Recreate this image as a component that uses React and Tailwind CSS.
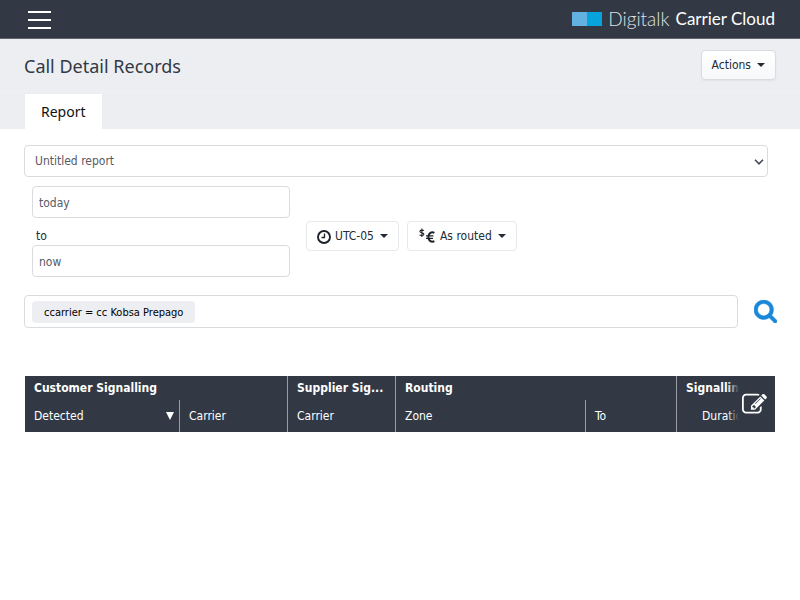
import React from "react";

const CARET = "h-0 w-0 border-x-4 border-t-4 border-x-transparent border-t-[#222b36]";
const FIELD =
  "w-full rounded border border-[#d9dbdf] bg-white text-xs text-[#555b66] outline-none";

function ClockIcon() {
  return (
    <svg className="h-4 w-4" viewBox="0 0 16 16" fill="none" stroke="#1c222b" aria-hidden="true">
      <circle cx="7" cy="9" r="6" strokeWidth="1.9" />
      <path d="M7.5 5.5V9.5H4.5" strokeWidth="1.3" />
    </svg>
  );
}

function CurrencyIcon() {
  return (
    <svg className="h-4 w-5" viewBox="0 0 20 16" fill="none" stroke="#1c222b" aria-hidden="true">
      <path d="M5.9 2.6C5.3 2 1.9 1.7 1.9 3.4C1.9 5.1 5.9 4.3 5.9 6.2C5.9 8 2.4 7.7 1.6 6.9M3.9 0.5V9" strokeWidth="1.1" />
      <path d="M16.4 4.9C13.6 3.4 10.4 5.2 10.4 9C10.4 13 13.6 14.8 16.4 13.2" strokeWidth="2" />
      <path d="M8 7.9H15.4M8 10.3H15" strokeWidth="1.3" />
    </svg>
  );
}

function SearchIcon() {
  return (
    <svg className="h-[23px] w-[23px]" viewBox="64 128 1664 1664" fill="#1a87d9" stroke="#1a87d9" strokeWidth="40" aria-hidden="true">
      <path d="M1216 832q0-185-131.5-316.5t-316.5-131.5-316.5 131.5-131.5 316.5 131.5 316.5 316.5 131.5 316.5-131.5 131.5-316.5zm512 832q0 52-38 90t-90 38q-54 0-90-38l-343-342q-179 124-399 124-143 0-273.5-55.5t-225-150-150-225-55.5-273.5 55.5-273.5 150-225 225-150 273.5-55.5 273.5 55.5 225 150 150 225 55.5 273.5q0 220-124 399l343 343q37 37 37 90z" />
    </svg>
  );
}

function EditIcon() {
  return (
    <svg className="h-[25px] w-[25px]" viewBox="0 0 1792 1792" fill="#fff" aria-hidden="true">
      <path d="M888 1184l116-116-152-152-116 116v56h96v96h56zm440-720q-16-16-33 1l-350 350q-17 17-1 33t33-1l350-350q17-17 1-33zm80 594v190q0 119-84.5 203.5t-203.5 84.5h-832q-119 0-203.5-84.5t-84.5-203.5v-832q0-119 84.5-203.5t203.5-84.5h832q63 0 117 25 15 7 18 23 3 17-9 29l-49 49q-14 14-32 8-23-6-45-6h-832q-66 0-113 47t-47 113v832q0 66 47 113t113 47h832q66 0 113-47t47-113v-126q0-13 9-22l64-64q15-15 35-7t20 29zm-96-738l288 288-672 672h-288v-288zm444 132l-92 92-288-288 92-92q28-28 68-28t68 28l152 152q28 28 28 68t-28 68z" />
    </svg>
  );
}

function Header() {
  return (
    <header className="flex h-[39px] items-center justify-between border-b border-[#5f6672] bg-[#323944] pl-7 pr-[25px]">
      <button type="button" aria-label="Menu" className="flex w-[23px] flex-col gap-1.5 pt-0.5">
        <span className="h-0.5 w-full bg-white" />
        <span className="h-0.5 w-full bg-white" />
        <span className="h-0.5 w-full bg-white" />
      </button>
      <a href="#" className="flex items-center font-['Lato',sans-serif] text-[17px] leading-6 text-white">
        <span className="h-3.5 w-[15px] bg-[#63b1e0]" />
        <span className="mr-1.5 h-3.5 w-[15px] bg-[#06a3dc]" />
        <span className="mr-1.5 text-[19px] font-light text-[#dfe2e6]">Digitalk</span>
        <span>Carrier Cloud</span>
      </a>
    </header>
  );
}

function TitleBar() {
  return (
    <div className="bg-[#edeef2]">
      <div className="flex h-[53px] items-center justify-between border-b border-[#f0f1f4] px-6">
        <h1 className="pt-0.5 font-['Noto_Sans',sans-serif] text-lg text-[#323944]">Call Detail Records</h1>
        <button
          type="button"
          className="flex h-[30px] items-center gap-1.5 rounded-sm border border-[#d9dbe0] bg-linear-to-b from-white to-[#f7f8fa] px-2.5 text-xs text-[#222b36] shadow-xs"
        >
          Actions <span className={CARET} />
        </button>
      </div>
      <nav className="flex px-[25px] pt-0.5">
        <a href="#report" className="bg-white px-4 font-['Noto_Sans',sans-serif] text-sm leading-[35px] text-[#111]">
          Report
        </a>
      </nav>
    </div>
  );
}

function OptionButton({ icon, children }) {
  return (
    <button
      type="button"
      className="flex h-[30px] items-center rounded border border-[#e6e8ec] bg-white px-2.5 text-xs text-[#222b36]"
    >
      {icon}
      <span className="ml-0.5 mr-1.5">{children}</span>
      <span className={CARET} />
    </button>
  );
}

function Filters() {
  return (
    <form className="px-6 pt-4">
      <div className="relative mr-2">
        <select aria-label="Report" className={`${FIELD} h-8 appearance-none px-2.5`}>
          <option>Untitled report</option>
        </select>
        <svg className="pointer-events-none absolute right-1 top-3 h-2.5 w-2.5" viewBox="0 0 10 10" fill="none" stroke="#444a54" strokeWidth="1.6" aria-hidden="true">
          <path d="M1 2.8L5 6.8L9 2.8" />
        </svg>
      </div>
      <div className="mt-[9px] flex items-center gap-4 pl-2">
        <div className="w-[258px]">
          <input aria-label="From" defaultValue="today" className={`${FIELD} h-8 px-1.5 pt-0.5`} />
          <label htmlFor="until" className="block px-1 pt-2.5 text-xs leading-[17px] text-[#222b36]">
            to
          </label>
          <input id="until" defaultValue="now" className={`${FIELD} h-8 px-1.5 pt-0.5`} />
        </div>
        <div className="flex gap-2 pt-2">
          <OptionButton icon={<ClockIcon />}>UTC-05</OptionButton>
          <OptionButton icon={<CurrencyIcon />}>As routed</OptionButton>
        </div>
      </div>
      <div className="mt-[18px] flex items-center gap-4">
        <div className="flex h-[33px] min-w-0 grow items-center rounded border border-[#d9dbdf] px-[7px]">
          <span className="rounded-sm bg-[#edeef2] px-3 pt-0.5 text-[11px] leading-5 text-black">
            ccarrier = cc Kobsa Prepago
          </span>
          <input aria-label="Filter" className="min-w-0 grow outline-none" />
        </div>
        <button type="button" aria-label="Search" className="-mr-px">
          <SearchIcon />
        </button>
      </div>
    </form>
  );
}

function Records() {
  const group = "h-6 truncate px-[9px] text-left font-bold";
  const cell = "h-8 truncate px-[9px] text-left font-normal";
  const line = "border-l border-[#989da6]";
  return (
    <div className="relative mx-[25px] mt-12 overflow-hidden bg-[#323944]">
      <table className="w-full table-fixed border-separate border-spacing-0 text-xs text-white">
        <colgroup>
          <col className="w-[154px]" />
          <col className="w-[108px]" />
          <col className="w-[108px]" />
          <col className="w-[190px]" />
          <col className="w-[91px]" />
          <col />
        </colgroup>
        <thead>
          <tr>
            <th colSpan={2} className={group}>Customer Signalling</th>
            <th className={`${group} ${line}`}>Supplier Sig...</th>
            <th colSpan={2} className={`${group} ${line}`}>Routing</th>
            <th className={`${group} ${line}`}>Signalling</th>
          </tr>
          <tr>
            <th className={cell}>
              <span className="flex items-center justify-between">
                Detected
                <span className="-mr-1 h-0 w-0 border-x-4 border-t-8 border-x-transparent border-t-white" />
              </span>
            </th>
            <th className={`${cell} ${line}`}>Carrier</th>
            <th className={`${cell} ${line}`}>Carrier</th>
            <th className={`${cell} ${line}`}>Zone</th>
            <th className={`${cell} ${line}`}>To</th>
            <th className={`${cell} ${line}`}>
              <span className="pl-4">Duration</span>
            </th>
          </tr>
        </thead>
      </table>
      <div className="absolute inset-y-0 right-0 flex">
        <span className="w-3 bg-linear-to-r from-transparent to-[#323944]" />
        <button type="button" aria-label="Edit columns" className="w-9 bg-[#323944] pl-[3px]">
          <EditIcon />
        </button>
      </div>
    </div>
  );
}

export default function App() {
  return (
    <div className="min-h-screen bg-white font-['Tahoma','DejaVu_Sans_Condensed','Noto_Sans',sans-serif]">
      <Header />
      <TitleBar />
      <main>
        <Filters />
        <Records />
      </main>
    </div>
  );
}
